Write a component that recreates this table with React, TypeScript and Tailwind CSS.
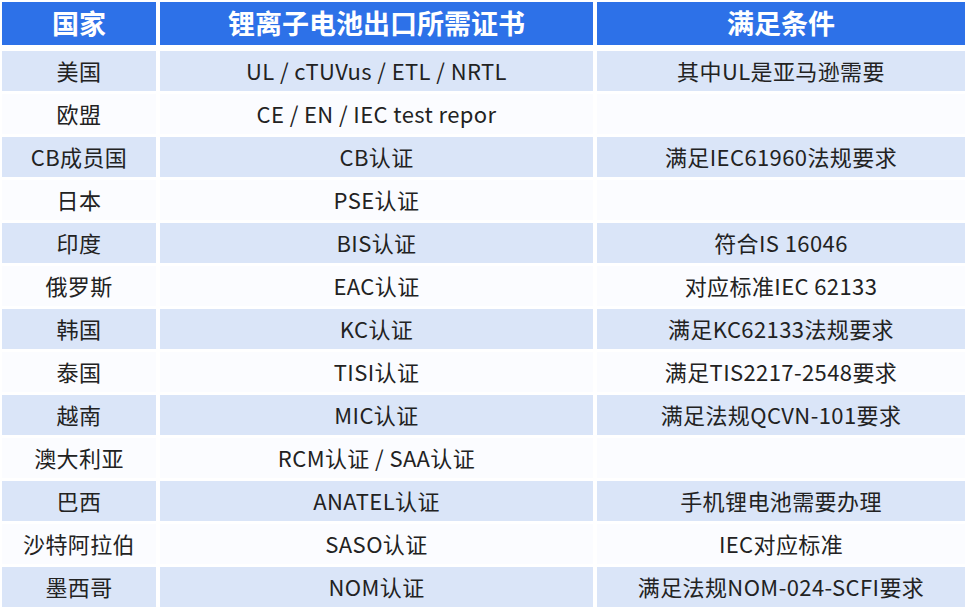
const rows = [
  ["美国", "UL / cTUVus / ETL / NRTL", "其中UL是亚马逊需要"],
  ["欧盟", "CE / EN / IEC test repor", ""],
  ["CB成员国", "CB认证", "满足IEC61960法规要求"],
  ["日本", "PSE认证", ""],
  ["印度", "BIS认证", "符合IS 16046"],
  ["俄罗斯", "EAC认证", "对应标准IEC 62133"],
  ["韩国", "KC认证", "满足KC62133法规要求"],
  ["泰国", "TISI认证", "满足TIS2217-2548要求"],
  ["越南", "MIC认证", "满足法规QCVN-101要求"],
  ["澳大利亚", "RCM认证 / SAA认证", ""],
  ["巴西", "ANATEL认证", "手机锂电池需要办理"],
  ["沙特阿拉伯", "SASO认证", "IEC对应标准"],
  ["墨西哥", "NOM认证", "满足法规NOM-024-SCFI要求"],
];

const headers = ["国家", "锂离子电池出口所需证书", "满足条件"];

const App = () => {
  return (
    <div
      className="w-[967px] h-[608px] overflow-hidden bg-white pt-[2px] pl-[2px]"
      style={{ fontFamily: '"Noto Sans CJK SC", "Noto Sans", sans-serif' }}
    >
      {/* header */}
      <div className="grid grid-cols-[154px_433px_368px] gap-x-[4px]">
        {headers.map((h) => (
          <div
            key={h}
            className="h-[43px] bg-[#2d71e8] text-white text-[27px] font-bold flex items-center justify-center leading-none pb-[2px]"
          >
            {h}
          </div>
        ))}
      </div>

      {/* body */}
      <div className="mt-[6px] grid grid-cols-[154px_433px_368px] gap-x-[4px] gap-y-[3px]">
        {rows.map((r, i) =>
          r.map((cell, j) => (
            <div
              key={`${i}-${j}`}
              className={`h-[40px] flex items-center justify-center text-[22px] tracking-[0.4px] text-[#222] leading-none pb-[3px] ${
                i % 2 === 0 ? "bg-[#dae5f8]" : "bg-[#fbfcff]"
              }`}
            >
              {cell}
            </div>
          ))
        )}
      </div>
    </div>
  );
};

export default App;
